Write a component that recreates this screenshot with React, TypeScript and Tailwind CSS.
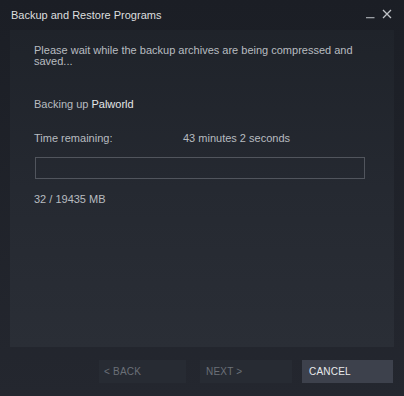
import React from "react";

export default function App() {
  return (
    <div
      className="w-[404px] h-[396px] flex flex-col bg-gradient-to-b from-[#1b1e25] to-[#24272f] text-[#b8bcc0] overflow-hidden"
      style={{ fontFamily: '"Liberation Sans", Arial, sans-serif' }}
    >
      {/* title bar */}
      <div className="h-[30px] flex items-start pl-[11px] pr-[12px] pt-[9px]">
        <div className="text-[11px] text-[#dcdedf] leading-[13px]">Backup and Restore Programs</div>
        <div className="ml-auto flex items-start gap-[7px]">
          <svg width="9" height="14" viewBox="0 0 9 14">
            <rect x="0" y="8" width="8.5" height="1.3" fill="#9a9ea4" />
          </svg>
          <svg width="10" height="10" viewBox="0 0 10 10" className="mt-[0px]">
            <path d="M1 1 L9 9 M9 1 L1 9" stroke="#c0c3c7" strokeWidth="1.3" />
          </svg>
        </div>
      </div>
      {/* content panel */}
      <div className="mx-[10px] h-[317px] bg-gradient-to-b from-[#1f232a] via-[#252931] to-[#2a2e36] pl-[24px] pr-[20px] pt-[15px] text-[11px] leading-[12px]">
        <div className="leading-[11px]">Please wait while the backup archives are being compressed and saved...</div>
        <div className="mt-[31px] flex gap-[3px]">
          <span>Backing up</span>
          <span className="text-[#e4e6e8] font-medium">Palworld</span>
        </div>
        <div className="mt-[22px] flex">
          <span className="w-[149px]">Time remaining:</span>
          <span>43 minutes 2 seconds</span>
        </div>
        <div className="mt-[13px] ml-[1px] w-[330px] h-[22px] border border-[#51555d]" />
        <div className="mt-[14px]">32 / 19435 MB</div>
      </div>
      {/* buttons */}
      <div className="mt-[13px] flex items-stretch h-[23px] pl-[99px] text-[10px] tracking-[0.2px]">
        <div className="w-[87px] bg-[#272b33] flex items-center pl-[5px] text-[#6b7078]">&lt; BACK</div>
        <div className="ml-[14px] w-[92px] bg-[#272b33] flex items-center pl-[6px] text-[#6b7078]">NEXT &gt;</div>
        <div className="ml-[10px] w-[91px] bg-[#3d414c] flex items-center pl-[7px] text-[#e8eaec]">CANCEL</div>
      </div>
    </div>
  );
}
